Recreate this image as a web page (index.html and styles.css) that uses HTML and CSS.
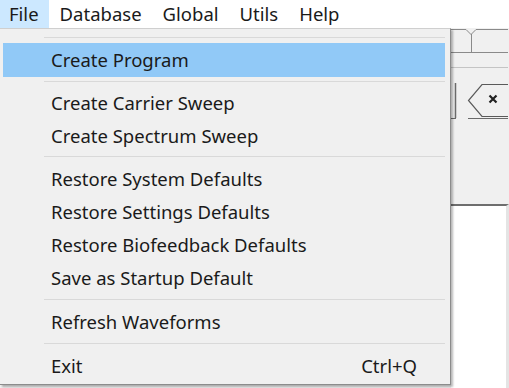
FILE: index.html
```html
<!DOCTYPE html>
<html lang="en">
<head>
    <meta charset="UTF-8">
    <title>File Menu</title>
    <link rel="stylesheet" href="styles.css">
</head>
<body>
    <div class="menubar">
        <span class="menubar-item active">File</span>
        <span class="menubar-item">Database</span>
        <span class="menubar-item">Global</span>
        <span class="menubar-item">Utils</span>
        <span class="menubar-item">Help</span>
    </div>
    <div class="workspace">
        <div class="dropdown">
            <div class="separator top"></div>
            <div class="menu-item selected"><span>Create Program</span></div>
            <div class="separator first"></div>
            <div class="menu-item"><span>Create Carrier Sweep</span></div>
            <div class="menu-item"><span>Create Spectrum Sweep</span></div>
            <div class="separator"></div>
            <div class="menu-item"><span>Restore System Defaults</span></div>
            <div class="menu-item"><span>Restore Settings Defaults</span></div>
            <div class="menu-item"><span>Restore Biofeedback Defaults</span></div>
            <div class="menu-item"><span>Save as Startup Default</span></div>
            <div class="separator wide"></div>
            <div class="menu-item"><span>Refresh Waveforms</span></div>
            <div class="separator wide"></div>
            <div class="menu-item"><span>Exit</span><span class="shortcut">Ctrl+Q</span></div>
        </div>
        <div class="window-strip">
            <div class="toolbar">
                <svg width="57" height="176" viewBox="0 0 57 176">
                    <!-- tab outline -->
                    <path d="M0 1.5 H15 L20 6.5 L25 1.5 H57" fill="none" stroke="#8a8a8a" stroke-width="1"/>
                    <path d="M20.5 6 V24" stroke="#8a8a8a" stroke-width="1"/>
                    <path d="M0 24.5 H57" stroke="#8a8a8a" stroke-width="1"/>
                    <path d="M0 39.5 H57" stroke="#c4c4c4" stroke-width="1"/>
                    <!-- hidden button edge -->
                    <path d="M4.5 55 V90" stroke="#6a6a6a" stroke-width="1.5"/>
                    <path d="M0 90.5 H5" stroke="#6a6a6a" stroke-width="1"/>
                    <!-- backspace button -->
                    <path d="M57 56.5 H31 L17.5 72.5 L31 88.5 H57" fill="#f0f0f0" stroke="#5a5a5a" stroke-width="1.2"/>
                    <path d="M17 90.5 H57" stroke="#6a6a6a" stroke-width="1"/>
                    <path d="M38.5 67.5 L45.5 74.5 M45.5 67.5 L38.5 74.5" stroke="#222" stroke-width="2.2"/>
                </svg>
            </div>
            <div class="panel"></div>
        </div>
    </div>
</body>
</html>
```

FILE: styles.css
```css
body {
    margin: 0;
    width: 509px;
    height: 388px;
    overflow: hidden;
    background: #f0f0f0;
    font-family: 'Noto Sans', 'DejaVu Sans', sans-serif;
    color: #1a1a1a;
}
.menubar {
    height: 28px;
    background: #fff;
    display: flex;
    align-items: center;
    font-size: 18.5px;
}
.menubar-item {
    height: 28px;
    line-height: 27px;
    padding: 0 10px 0 11px;
}
.menubar-item.active {
    background: #cce8ff;
    padding-left: 9px;
}
.workspace {
    display: flex;
    height: 360px;
}
.dropdown {
    width: 451px;
    height: 357px;
    flex-shrink: 0;
    background: #f0f0f0;
    border-top: 1px solid #cfcfcf;
    border-right: 1px solid #8c8c8c;
    border-bottom: 1px solid #8c8c8c;
    box-shadow: 2px 2px 2px rgba(0, 0, 0, 0.28);
    box-sizing: border-box;
    padding: 0 5px 0 3px;
    font-size: 18.5px;
    position: relative;
    z-index: 1;
}
.separator {
    height: 1px;
    background: #d9d9d9;
    margin: 4px 0 5px 41px;
}
.separator.top {
    margin: 8px 0 5px 41px;
}
.separator.first {
    margin: 4px 0 4px 41px;
}
.separator.wide {
    margin: 5px 0 5px 41px;
}
.menu-item {
    height: 33px;
    box-sizing: border-box;
    padding: 0 28px 1px 48px;
    display: flex;
    align-items: center;
    justify-content: space-between;
}
.menu-item.selected {
    background: #91c9f7;
    height: 34px;
}
.window-strip {
    flex: 1;
    display: flex;
    flex-direction: column;
}
.toolbar {
    height: 176px;
}
.toolbar svg {
    display: block;
}
.panel {
    flex: 1;
    background: #fff;
    border-top: 2px solid #6e6e6e;
    border-right: 3px solid #e4e4e4;
}
```
